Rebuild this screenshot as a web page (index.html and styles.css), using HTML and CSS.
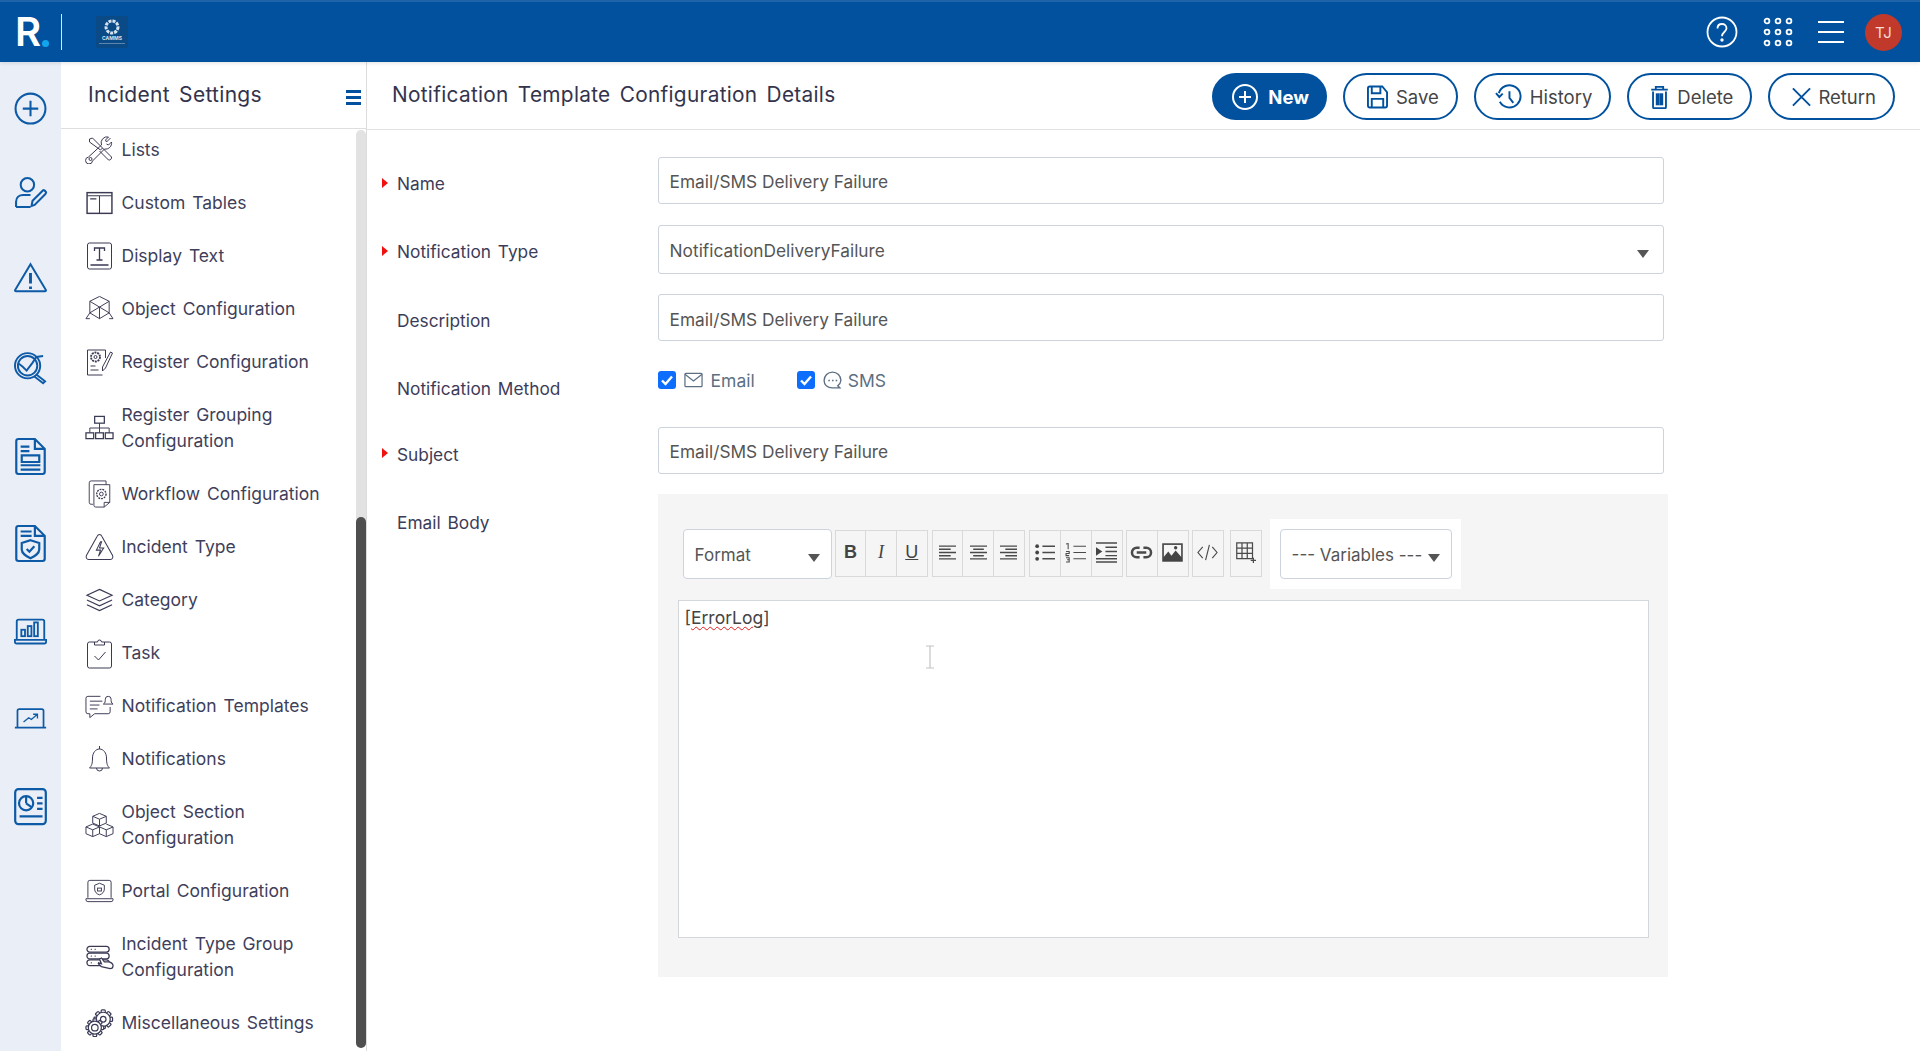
FILE: index.html
```html
<!DOCTYPE html>
<html lang="en">
<head>
<meta charset="utf-8">
<title>Notification Template Configuration Details</title>
<link rel="stylesheet" href="styles.css">
</head>
<body>
<header class="topbar">
  <div class="brand"><span class="brand-r">R<i class="brand-dot"></i></span></div>
  <div class="client-logo">
    <svg viewBox="0 0 32 32" width="32" height="32"><circle cx="16" cy="11" r="6" fill="none" stroke="#d5e3f0" stroke-width="3" stroke-dasharray="3 1"/><text x="16" y="24" class="logo-text">CAMMS</text><rect x="3" y="27" width="26" height="1" fill="#5d86ad"/></svg>
  </div>
  <div class="top-actions">
    <svg class="ti" viewBox="0 0 32 32" width="32" height="32"><circle cx="16" cy="16" r="14.5"/><path d="M11.5 12.500c0-3 2-4.500 4.500-4.500s4.500 1.700 4.500 4.200c0 3.800-4.500 3.800-4.500 8"/><circle cx="16" cy="24" r=".8"/></svg>
    <svg class="ti" viewBox="0 0 30 30" width="30" height="30"><g><circle cx="4" cy="4" r="2.400"/><circle cx="15" cy="4" r="2.400"/><circle cx="26" cy="4" r="2.400"/><circle cx="4" cy="15" r="2.400"/><circle cx="15" cy="15" r="2.400"/><circle cx="26" cy="15" r="2.400"/><circle cx="4" cy="26" r="2.400"/><circle cx="15" cy="26" r="2.400"/><circle cx="26" cy="26" r="2.400"/></g></svg>
    <svg class="ti" viewBox="0 0 26 24" width="26" height="24"><path d="M0 2h26M0 12h26M0 22h26"/></svg>
    <span class="avatar">TJ</span>
  </div>
</header>

<div class="shell">
  <nav class="rail">
    <svg viewBox="0 0 32 32"><circle cx="16" cy="16" r="14.500"/><path d="M16 8.500v15M8.500 16h15"/></svg>
    <svg viewBox="0 3 32 32"><circle cx="13" cy="8.500" r="6.500"/><path d="M2 30v-5c0-4 3-6.500 7-6.500h7M2 30h14"/><path d="M17 29l1-5 10-10c1-1 2.500 1 3 1.500s-.5 2-1 2.500L20 28z"/></svg>
    <svg viewBox="0 5 34 32"><path d="M17 2L33 29a1 1 0 0 1-1 1H2a1 1 0 0 1-1-1z"/><path d="M17 11v11M17 25v2.500" stroke-width="3"/></svg>
    <svg viewBox="0 3 34 34"><circle cx="14" cy="15" r="13"/><circle cx="14" cy="15" r="10"/><path d="M5 13l4 3 4 4 6-8 4-6 7-1"/><path d="M23 24l9 7-2 2-9-7"/></svg>
    <svg viewBox="0 1 28 34"><path d="M3 1h15l9 9v21a2 2 0 0 1-2 2H3a2 2 0 0 1-2-2V3a2 2 0 0 1 2-2zM18 1v9h9"/><path d="M5 8h8M5 12h8M6 16h16v6H6zM5 25h18M5 29h18"/></svg>
    <svg viewBox="0 1 28 34"><path d="M3 1h15l9 9v21a2 2 0 0 1-2 2H3a2 2 0 0 1-2-2V3a2 2 0 0 1 2-2zM18 1v9h9"/><path d="M5 6h10M5 10h10"/><path d="M14 14l8 2.500v6c0 4-4 6-8 8-4-2-8-4-8-8v-6z"/><path d="M10.500 22l2.500 2.500 4.500-5"/></svg>
    <svg viewBox="0 0 36 28"><path d="M3 22V3a2 2 0 0 1 2-2h26a2 2 0 0 1 2 2v19"/><path d="M1 23h34v2a2 2 0 0 1-2 2H3a2 2 0 0 1-2-2z"/><rect x="8" y="12" width="4" height="7"/><rect x="15" y="8" width="4" height="11"/><rect x="22" y="4" width="4" height="15"/></svg>
    <svg viewBox="0 0 38 24"><path d="M4 22V3a2 2 0 0 1 2-2h26a2 2 0 0 1 2 2v19M1 22.500h36"/><path d="M11 16l6-5 3 2 7-6M22 7h5v5" stroke-width="1.500"/></svg>
    <svg viewBox="0 0 30 34"><rect x="1" y="1" width="28" height="32" rx="3"/><circle cx="11" cy="14" r="6.500"/><path d="M11 14V7.500M11 14l5 3.500M21 9h5M21 14h5M21 19h5M5 26h21"/></svg>
  </nav>

  <aside class="side">
    <div class="side-head">
      <h2 class="side-title">Incident Settings</h2>
      <span class="side-toggle"><i></i><i></i><i></i></span>
    </div>
    <div class="side-body">
      <ul class="menu">
        <li><svg viewBox="0 0 28 28"><path d="M4 3l3-1 10 10-2 2L4 6zM14 15l9 9a2.500 2.500 0 0 0 3-3l-9-9"/><path d="M25 2l-4 4-1-2 3-3a6 6 0 0 0-7 8L3 21a3.500 3.500 0 1 0 4 4l12-12a6 6 0 0 0 7-7l-3 3-2-1"/><circle cx="5" cy="23" r="1.500"/></svg><span>Lists</span></li>
        <li><svg viewBox="0 0 28 24"><rect x="2" y="2" width="24" height="20" stroke-width="1.400"/><path d="M2 5h24M14 5v17M5 8h6"/></svg><span>Custom Tables</span></li>
        <li><svg viewBox="0 0 28 28"><rect x="2" y="1" width="24" height="26" rx="2"/><path d="M9 9V6h10v3M14 6v12M11 18h6M5 23h18" stroke-width="1.300"/></svg><span>Display Text</span></li>
        <li><svg viewBox="0 0 30 28"><path d="M15 1l10 5v12l-10 6-10-6V6zM5 6l10 6 10-6M15 12v12M5 18l10-6 10 6M1 24l4-6M29 24l-4-6M1 24h4M25 24h4"/></svg><span>Object Configuration</span></li>
        <li><svg viewBox="0 0 28 28"><path d="M20 2H2v25h15M20 2v8"/><circle cx="10" cy="9" r="4.500" stroke-dasharray="2 .8" stroke-width="1.800"/><circle cx="10" cy="9" r="1.500"/><path d="M5 18h5M5 22h8"/><path d="M25 4l2 1-7 15-3 3 0-4z"/></svg><span>Register Configuration</span></li>
        <li class="two"><svg viewBox="0 0 30 28"><rect x="10" y="2" width="10" height="7" stroke-width="1.300"/><path d="M15 9v5M5 19v-5h20v5M15 14v5"/><rect x="1" y="19" width="8" height="6" stroke-width="1.300"/><rect x="11" y="19" width="8" height="6" stroke-width="1.300"/><rect x="21" y="19" width="8" height="6" stroke-width="1.300"/></svg><span>Register Grouping Configuration</span></li>
        <li><svg viewBox="0 0 26 30"><path d="M6 26H4a2 2 0 0 1-2-2V3a2 2 0 0 1 2-2h16v4"/><path d="M7 5h17v19l-6 5H9a2 2 0 0 1-2-2zM24 24h-6v5"/><circle cx="15" cy="15" r="5" stroke-dasharray="2 1" stroke-width="1.500"/><circle cx="15" cy="15" r="2"/></svg><span>Workflow Configuration</span></li>
        <li><svg viewBox="0 0 28 26"><path d="M14 1c1 0 2 1 2.500 2l10 18c1 2 0 4-2 4H3.500c-2 0-3-2-2-4l10-18C12 2 13 1 14 1z"/><path d="M15 8l-4 8h4l-2 6 5-8h-4l2-6z"/></svg><span>Incident Type</span></li>
        <li><svg viewBox="0 0 30 24"><path d="M15 1l13 6-13 6L2 7zM2 12l13 6 13-6M2 17l13 6 13-6" stroke-width="1.200"/></svg><span>Category</span></li>
        <li><svg class="tall" viewBox="0 0 26 32"><path d="M8 5H3a2 2 0 0 0-2 2v22a2 2 0 0 0 2 2h20a2 2 0 0 0 2-2V7a2 2 0 0 0-2-2h-5"/><path d="M8 8V5h3a2 2 0 0 1 4 0h3v3z"/><path d="M8 19l4 4 7-8"/></svg><span>Task</span></li>
        <li><svg viewBox="0 0 30 26"><path d="M16 3H3a2 2 0 0 0-2 2v14a2 2 0 0 0 2 2h2v4l5-4h14a2 2 0 0 0 2-2v-5"/><path d="M5 8h13M5 12h10M5 16h8"/><path d="M19 11h10c-2-1-2-3-2-5a3 3 0 0 0-6 0c0 2 0 4-2 5z"/></svg><span>Notification Templates</span></li>
        <li><svg viewBox="0 0 24 28"><path d="M12 1v3M2 23c2-2 3-4 3-10 0-5 3-9 7-9s7 4 7 9c0 6 1 8 3 10zM9 23a3 3 0 0 0 6 0"/></svg><span>Notifications</span></li>
        <li class="two"><svg viewBox="0 0 30 26"><path d="M15 1l7 3v7l-7 3-7-3V4zM8 4l7 3 7-3M15 7v7M8 12l7 3v7l-7 3-7-3v-7zM1 15l7 3 7-3M8 18v7M22 12l7 3v7l-7 3-7-3M15 15l7 3 7-3M22 18v7"/></svg><span>Object Section Configuration</span></li>
        <li><svg viewBox="0 0 30 24"><path d="M3 19V3a2 2 0 0 1 2-2h20a2 2 0 0 1 2 2v16M1 20h28v1a2 2 0 0 1-2 2H3a2 2 0 0 1-2-2z"/><path d="M15 4l5 2v4c0 3-2 5-5 6-3-1-5-3-5-6V6z"/><rect x="13" y="9" width="4" height="3"/></svg><span>Portal Configuration</span></li>
        <li class="two"><svg viewBox="0 0 30 24"><rect x="2" y="1" width="23" height="6" rx="3" stroke-width="1.300"/><rect x="2" y="8" width="23" height="6" rx="3" stroke-width="1.300"/><rect x="2" y="15" width="23" height="6" rx="3" stroke-width="1.300"/><path d="M6 4h1M10 4h1M6 11h1M10 11h1M6 18h1" stroke-width="1.300"/><path d="M17 22c-2-2-4-3-3-4l3 1-2-5 2-1 3 4 5 0c3 1 4 3 4 4 0 2-1 3-3 3z" fill="#fff" stroke-width="1.300"/></svg><span>Incident Type Group Configuration</span></li>
        <li><svg viewBox="0 0 30 30">
          <g transform="translate(19 11)"><g class="gear"><rect x="-2.200" y="-10" width="4.400" height="20" rx="1"/><rect x="-2.200" y="-10" width="4.400" height="20" rx="1" transform="rotate(45)"/><rect x="-2.200" y="-10" width="4.400" height="20" rx="1" transform="rotate(90)"/><rect x="-2.200" y="-10" width="4.400" height="20" rx="1" transform="rotate(135)"/><circle r="7.500"/><circle r="3"/></g></g>
          <g transform="translate(10 20)"><g class="gear"><rect x="-2" y="-9.500" width="4" height="19" rx="1"/><rect x="-2" y="-9.500" width="4" height="19" rx="1" transform="rotate(45)"/><rect x="-2" y="-9.500" width="4" height="19" rx="1" transform="rotate(90)"/><rect x="-2" y="-9.500" width="4" height="19" rx="1" transform="rotate(135)"/><circle r="7"/><circle r="3.500"/></g></g>
        </svg><span>Miscellaneous Settings</span></li>
      </ul>
      <div class="scrollbar"><div class="thumb"></div></div>
    </div>
  </aside>

  <main class="main">
    <div class="main-head">
      <h1 class="page-title">Notification Template Configuration Details</h1>
      <div class="actions">
        <button class="btn primary"><svg viewBox="0 0 26 26"><circle cx="13" cy="13" r="12"/><path d="M13 7v12M7 13h12"/></svg>New</button>
        <button class="btn btn-save"><svg viewBox="0 0 22 24"><path d="M1 3a2 2 0 0 1 2-2h13l5 6v14a2 2 0 0 1-2 2H3a2 2 0 0 1-2-2zM5 1v7h9V1M5 23v-9h12v9"/></svg>Save</button>
        <button class="btn btn-hist"><svg class="wide" viewBox="0 0 28 26"><path d="M4 9a11.500 11.500 0 1 1 1 9"/><path d="M1 9l3.500 4L8 9.500M15 7v7l4 5"/></svg>History</button>
        <button class="btn btn-del"><svg viewBox="0 0 20 26"><path d="M3 7v17a1 1 0 0 0 1 1h12a1 1 0 0 0 1-1V7M1 5h18M6 5V2h8v3"/><rect x="7" y="10" width="2" height="11"/><rect x="11" y="10" width="2" height="11"/></svg>Delete</button>
        <button class="btn btn-ret"><svg viewBox="0 0 22 22"><path d="M2 2l18 18M20 2L2 20"/></svg>Return</button>
      </div>
    </div>

    <form class="form">
      <div class="row row-name"><label class="req">Name</label><div class="ctl"><div class="input">Email/SMS Delivery Failure</div></div></div>
      <div class="row row-type"><label class="req">Notification Type</label><div class="ctl"><div class="input select">NotificationDeliveryFailure<i class="caret"></i></div></div></div>
      <div class="row row-desc"><label>Description</label><div class="ctl"><div class="input">Email/SMS Delivery Failure</div></div></div>
      <div class="row row-method"><label>Notification Method</label>
        <div class="checks">
          <span class="check"><i class="box"><svg viewBox="0 0 18 18"><path d="M4 9.500l3.500 3.500L14 5.500"/></svg></i><svg class="cicon" viewBox="0 0 20 16"><rect x="1" y="1" width="18" height="14" rx="1"/><path d="M1 2l9 7 9-7"/></svg><span>Email</span></span>
          <span class="check check-sms"><i class="box"><svg viewBox="0 0 18 18"><path d="M4 9.500l3.500 3.500L14 5.500"/></svg></i><svg class="cicon cicon-sms" viewBox="0 0 20 20"><path d="M10 2a8 8 0 0 0-8 8c0 4 3 7 8 7h7l-2-2a7 7 0 0 0 3-5 8 8 0 0 0-8-8z"/><path d="M6 10h1.500M9.500 10h1.500M13 10h1.500"/></svg><span>SMS</span></span>
        </div>
      </div>
      <div class="row row-subject"><label class="req">Subject</label><div class="ctl"><div class="input">Email/SMS Delivery Failure</div></div></div>
      <div class="row row-body"><label>Email Body</label>
        <div class="editor">
          <div class="toolbar">
            <div class="dd dd-format">Format<i class="caret"></i></div>
            <div class="tgroup tg-text">
              <b class="tb tb-b">B</b><i class="tb tb-i">I</i><u class="tb tb-u">U</u>
            </div>
            <div class="tgroup tg-text">
              <span class="tb tb-align"><svg viewBox="0 0 16 14"><path d="M0 1h16M0 4h11M0 7h16M0 10h11M0 13h16"/></svg></span>
              <span class="tb tb-align"><svg viewBox="0 0 16 14"><path d="M0 1h16M3 4h10M0 7h16M3 10h10M0 13h16"/></svg></span>
              <span class="tb tb-align"><svg viewBox="0 0 16 14"><path d="M0 1h16M5 4h11M0 7h16M5 10h11M0 13h16"/></svg></span>
            </div>
            <div class="tgroup tg-list">
              <span class="tb"><svg viewBox="0 0 20 18"><path d="M8 3h12M8 9h12M8 15h12"/><circle cx="3" cy="3" r="1.800" class="fill"/><circle cx="3" cy="9" r="1.800" class="fill"/><circle cx="3" cy="15" r="1.800" class="fill"/></svg></span>
              <span class="tb"><svg viewBox="0 0 20 18"><path d="M8 3h12M8 9h12M8 15h12M1 1l2-.5V6M1 8h3v2H1v2h3M1 14h3v4H1M2 16h2" stroke-width="1"/></svg></span>
              <span class="tb"><svg viewBox="0 0 20 20"><path d="M0 1h20M9 5h11M9 9h11M9 13h11M0 19h20M0 16h20"/><path d="M0 5l6 4-6 4z" class="fill"/></svg></span>
            </div>
            <div class="tgroup tg-link">
              <span class="tb"><svg viewBox="0 0 22 14"><path d="M9 2H6a5 5 0 0 0 0 10h3M13 2h3a5 5 0 0 1 0 10h-3M6 7h10" stroke-width="2.600"/></svg></span>
              <span class="tb"><svg viewBox="0 0 20 18"><rect x="1" y="1" width="18" height="16" stroke-width="1.600"/><path d="M1 17v-3l5-6 3 4 4-5 6 7v3z" class="fill"/><circle cx="13" cy="4.500" r="1.600" class="fill"/></svg></span>
            </div>
            <div class="tgroup tg-code">
              <span class="tb"><svg viewBox="0 0 22 16"><path d="M6 2L1 8l5 6M16 2l5 6-5 6M13 0L9 16" stroke-width="1.200"/></svg></span>
            </div>
            <div class="tgroup tg-table">
              <span class="tb"><svg viewBox="0 0 22 24"><path d="M1 1h18v18H1zM1 7h18M1 13h18M7 1v18M13 1v18" stroke-width="1.400"/><path d="M20 18v6M17 21h6" stroke-width="1.400"/></svg></span>
            </div>
            <div class="vars"><div class="dd dd-vars">--- Variables ---<i class="caret"></i></div></div>
          </div>
          <div class="doc">[<span class="spell">ErrorLog</span>]<svg class="ibeam" viewBox="0 0 10 24"><path d="M1 1h8M1 23h8M5 1v22"/></svg></div>
        </div>
      </div>
    </form>
  </main>
</div>
</body>
</html>
```

FILE: styles.css
```css
* { box-sizing: border-box; }
html, body { margin: 0; height: 1051px; overflow: hidden; background: #fff; }
body { font-family: Inter, "Noto Sans", "Liberation Sans", sans-serif; color: #3c3c58; display: flex; flex-direction: column; }

.topbar { height: 62px; flex: none; background: #01519e; border-top: 2px solid #1f63a8; display: flex; align-items: center; position: relative; z-index: 2; padding-right: 18px; box-shadow: 0 1px 4px rgba(0,0,0,.12); }
.brand { width: 62px; height: 36px; display: flex; align-items: center; padding-left: 15px; border-right: 1px solid #dce8f3; }
.brand-r { color: #fff; font-size: 40px; font-weight: 600; line-height: 36px; display: flex; align-items: flex-end; }
.brand-dot { width: 7px; height: 7px; border-radius: 50%; background: #12a5ee; margin: 0 0 3px 1px; }
.client-logo { margin-left: 34px; width: 32px; height: 32px; background: #0a4a86; }
.client-logo svg { display: block; }
.logo-text { font-size: 5px; font-weight: 700; fill: #d5e3f0; text-anchor: middle; }
.top-actions { margin-left: auto; display: flex; align-items: center; gap: 25px; }
.ti { fill: none; stroke: #fff; stroke-width: 1.800; display: block; }
.avatar { width: 37px; height: 37px; border-radius: 50%; background: #c0392b; color: #f7dcd8; font-size: 15px; display: flex; align-items: center; justify-content: center; margin-left: -4px; }

.shell { flex: 1; display: flex; min-height: 0; }

.rail { width: 61px; flex: none; background: #eaeef6; display: flex; flex-direction: column; align-items: center; padding-top: 3px; }
.rail svg { width: 33px; height: 87.200px; padding: 25px 0; flex: none; fill: none; stroke: #0d5aa7; stroke-width: 2; overflow: visible; }

.side { width: 306px; flex: none; border-right: 1px solid #dcdcdc; display: flex; flex-direction: column; }
.side-head { height: 67px; flex: none; border-bottom: 1px solid #dedede; display: flex; align-items: center; justify-content: space-between; padding: 0 5px 2px 27px; }
.side-title { margin: 0; font-size: 21px; font-weight: 400; color: #33334d; word-spacing: 3px; letter-spacing: .3px; }
.side-toggle { display: flex; flex-direction: column; gap: 3px; width: 15px; margin-top: 7px; }
.side-toggle i { height: 3px; background: #01519e; display: block; }
.side-body { flex: 1; display: flex; min-height: 0; }
.menu { list-style: none; margin: 0; padding: 0 0 0 24px; flex: 1; overflow: hidden; }
.menu li { display: flex; align-items: center; gap: 7.500px; height: 53px; font-size: 17.500px; line-height: 26px; word-spacing: 2px; color: #3f3f5c; }
.menu li:first-child { margin-top: -6px; }
.menu li.two { height: 79px; }
.menu svg { width: 29px; height: 28px; flex: none; fill: none; stroke: #3a3a55; stroke-width: 1; }
.menu svg.tall { height: 32px; }
.menu svg .gear rect, .menu svg .gear circle { fill: #fff; stroke-width: 1.300; }
.menu span { width: 215px; }
.scrollbar { width: 10px; background: #e2e2e2; border-radius: 5px; margin-top: 1px; padding-top: 387px; margin-bottom: 3px; }
.thumb { height: 100%; background: #4f4f4f; border-radius: 5px; }

.main { flex: 1; min-width: 0; }
.main-head { height: 68px; border-bottom: 1px solid #e2e2e2; display: flex; align-items: center; justify-content: space-between; padding: 2px 25px 0 25px; }
.page-title { margin: 0; font-size: 20.800px; font-weight: 400; color: #33334d; word-spacing: 3px; letter-spacing: .3px; margin-top: -4px; }
.actions { display: flex; gap: 16px; }
.btn { height: 47px; padding: 0 17px 0 22px; border: 2px solid #01519e; border-radius: 24px; background: #fff; color: #454545; font: 400 18.500px Inter, sans-serif; display: flex; align-items: center; gap: 8px; }
.btn svg { width: 21px; height: 24px; fill: none; stroke: #01519e; stroke-width: 2; }
.btn svg.wide { width: 27px; height: 26px; }
.btn-hist { padding-left: 19px; }
.btn-del { padding-left: 20px; gap: 7px; }
.btn-ret { padding-left: 21px; gap: 6px; }
.btn.primary { background: #01519e; color: #fff; font-weight: 700; padding-left: 18px; padding-right: 16px; gap: 10px; }
.btn.primary svg { width: 26px; height: 26px; stroke: #fff; }

.form { padding: 27px 0 0 25px; }
.row { display: flex; font-size: 17.300px; }
.row > label { width: 265.600px; flex: none; position: relative; padding-left: 5px; color: #3c3c58; word-spacing: 2px; padding-top: 16px; line-height: 22px; }
.req::before { content: ""; position: absolute; left: -10px; top: 21px; border-left: 6px solid #f01010; border-top: 5px solid transparent; border-bottom: 5px solid transparent; }
.ctl { width: 1006.400px; }
.input { height: 47px; border: 1px solid #ccd3dc; border-radius: 3px; padding: 1px 11px 0; font-size: 17.300px; color: #555; display: flex; align-items: center; background: #fff; }
.select { height: 49px; position: relative; }
.row-type { margin-top: 21px; }
.row-desc { margin-top: 20px; }
.row-desc .input { padding-top: 3px; }
.row-method { margin-top: 28px; height: 31px; }
.row-method > label { padding-top: 9px; }
.row-subject { margin-top: 27px; }
.row-subject > label { padding-top: 17px; }
.row-body { margin-top: 20px; }
.row-body > label { padding-top: 18px; }
.caret { display: block; width: 0; height: 0; border-top: 8px solid #555; border-left: 6px solid transparent; border-right: 6px solid transparent; }
.select .caret { position: absolute; right: 14px; top: 24px; }

.checks { display: flex; gap: 42px; margin-top: 2px; }
.check { display: flex; align-items: flex-start; gap: 8px; font-size: 17.500px; color: #5c6f82; }
.check span { line-height: 20px; }
.box { width: 18px; height: 18px; background: #0d6efd; border-radius: 3px; display: block; }
.box svg { display: block; fill: none; stroke: #fff; stroke-width: 2.400; }
.cicon { width: 19px; height: 16px; fill: none; stroke: #5c6f82; stroke-width: 1.300; margin-top: 1px; }
.check-sms { gap: 7px; }
.cicon-sms { width: 21px; height: 21px; margin-top: -1px; margin-right: -2px; }

.editor { width: 1010px; height: 483px; background: #f5f5f5; padding: 35px 20px 0 20px; }
.toolbar { display: flex; align-items: flex-start; height: 50px; margin-left: 5px; position: relative; }
.dd { height: 50px; background: #fff; border: 1px solid #ccd3dc; border-radius: 4px; display: flex; align-items: center; justify-content: space-between; font-size: 17px; color: #555; padding: 1px 11px 0; }
.dd .caret { margin-top: 6px; }
.dd-format { width: 149px; margin-right: 3px; }
.tgroup { display: flex; margin: 1px 4px 0 0; height: 47px; border: 1px solid #d9d9d9; }
.tg-list { margin-right: 3px; width: 94px; }
.tg-text { width: 93px; }
.tg-link { margin-right: 3px; width: 63px; }
.tg-code { margin-right: 6px; width: 32px; }
.tg-table { margin-right: 0; width: 32px; }
.tb { flex: 1; height: 45px; display: flex; align-items: center; justify-content: center; border-left: 1px solid #d9d9d9; color: #444; font-size: 18px; font-family: "Liberation Sans", sans-serif; padding-bottom: 2px; }
.tb:first-child { border-left: 0; }
.tb-i { font-family: "Liberation Serif", serif; }
.tb svg { width: 21px; height: 21px; flex: none; fill: none; stroke: #4a4a4a; stroke-width: 1.300; overflow: visible; }
.tb-align svg { width: 17px; height: 17px; }
.tb .fill { fill: #444; stroke: none; }
.vars { background: #fff; flex: none; width: 191px; height: 70px; margin: -10px 0 0 8px; padding: 10px 9px 0 10px; }
.dd-vars { width: 172px; }
.doc { height: 338px; margin-top: 21px; width: 971px; background: #fff; border: 1px solid #d3d6da; padding: 6px 6px; font-size: 17.500px; line-height: 22px; color: #444; position: relative; }
.spell { text-decoration: underline wavy #e02020 1px; text-underline-offset: 2px; }
.ibeam { position: absolute; left: 246px; top: 44px; width: 10px; height: 24px; fill: none; stroke: #c4c4c4; stroke-width: 1.200; }
```
